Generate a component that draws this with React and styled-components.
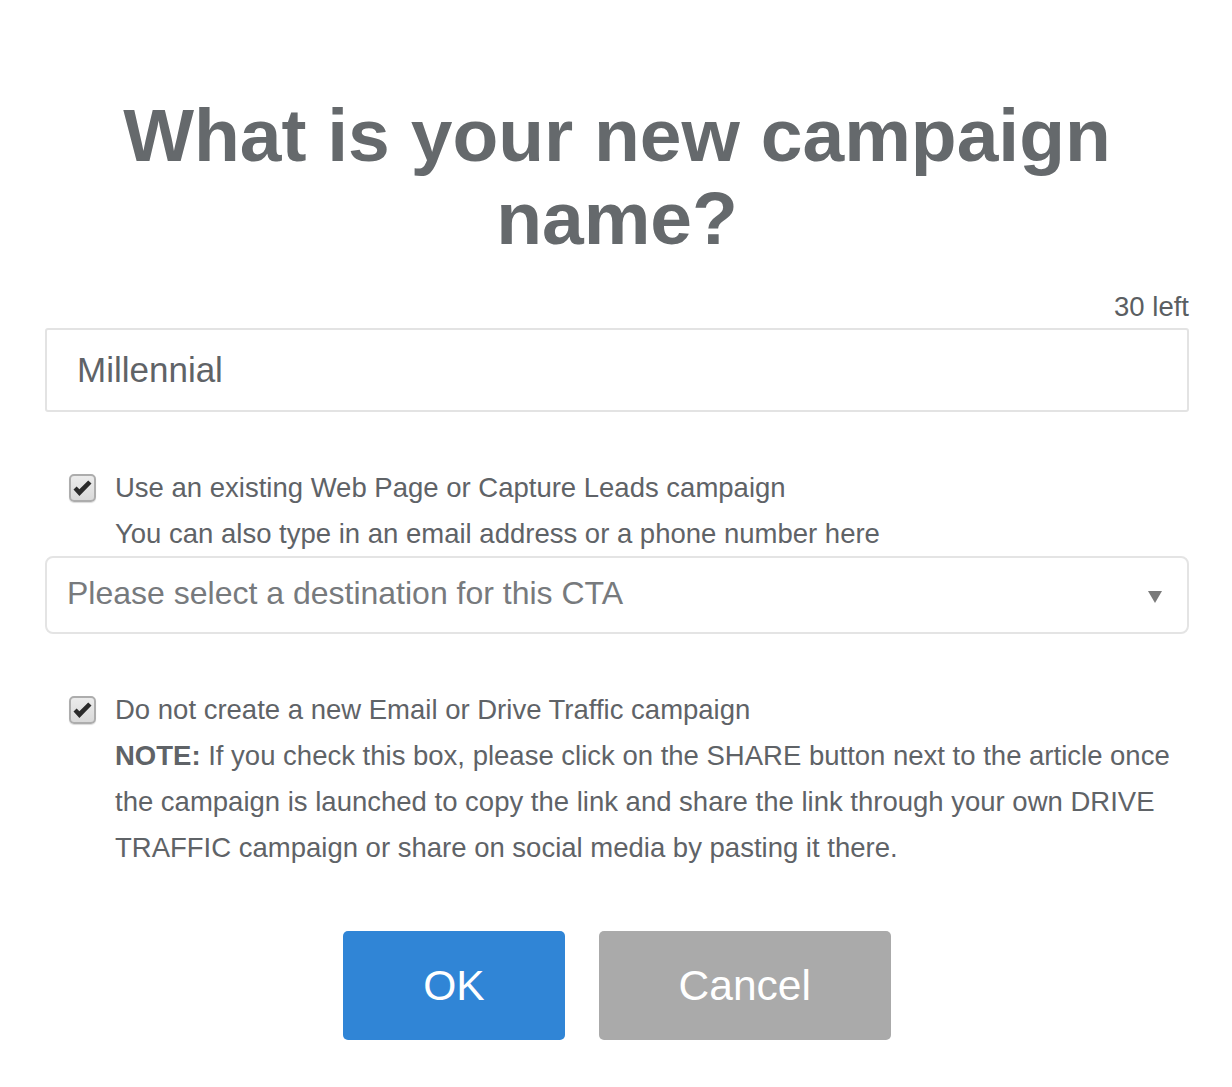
import React from "react";
import styled, { createGlobalStyle } from "styled-components";

const GlobalStyle = createGlobalStyle`
  body {
    margin: 0;
    background: #ffffff;
    font-family: "Liberation Sans", Arial, sans-serif;
  }
`;

const Dialog = styled.div`
  width: 1144px;
  margin-left: 45px;
  padding-top: 94px;
  padding-bottom: 47px;
  color: #5f6367;
`;

const Title = styled.h2`
  margin: 0;
  font-size: 75px;
  line-height: 83px;
  font-weight: bold;
  text-align: center;
  color: #65696c;
`;

const Counter = styled.div`
  margin-top: 31px;
  text-align: right;
  font-size: 27.5px;
  line-height: 31px;
  color: #5a5e62;
`;

const NameInput = styled.input`
  display: block;
  width: 100%;
  height: 84px;
  margin-top: 6px;
  box-sizing: border-box;
  border: 2px solid #e3e3e3;
  border-radius: 3px;
  padding: 0 30px;
  font-family: inherit;
  font-size: 35px;
  color: #5f6367;
  background: #fff;
  outline: none;
`;

const OptionRow = styled.div`
  display: flex;
  align-items: flex-start;
  margin-top: ${(p) => p.$top}px;
`;

const Box = styled.span`
  flex: none;
  width: 27px;
  height: 28px;
  margin: 9px 19px 0 24px;
  box-sizing: border-box;
  border: 2px solid #adadad;
  border-radius: 5px;
  background: linear-gradient(#ececec, #d9d9d9);
  box-shadow: 0 1px 1px rgba(0, 0, 0, 0.15);
  display: flex;
  align-items: center;
  justify-content: center;
`;

const OptionText = styled.div`
  flex: 1;
  font-size: 27.5px;
  line-height: 46px;
  color: #5f6367;
`;

const Strong = styled.b`
  font-weight: bold;
`;

const Select = styled.div`
  display: flex;
  align-items: center;
  justify-content: space-between;
  height: 78px;
  margin-top: -1px;
  box-sizing: border-box;
  border: 2px solid #e4e4e4;
  border-radius: 8px;
  padding: 0 25px 4px 20px;
  font-size: 32px;
  color: #777a7d;
`;

const Arrow = styled.span`
  width: 0;
  height: 0;
  border-left: 7.5px solid transparent;
  border-right: 7.5px solid transparent;
  border-top: 12px solid #7a7a7a;
  margin-top: 8px;
`;

const Actions = styled.div`
  display: flex;
  justify-content: center;
  gap: 34px;
  margin-top: 60px;
`;

const Button = styled.button`
  height: 109px;
  padding: 0 80px;
  border: none;
  border-radius: 5px;
  background: ${(p) => (p.$primary ? "#3085d6" : "#aaaaaa")};
  color: #ffffff;
  font-family: inherit;
  font-size: 42.5px;
  cursor: pointer;
`;

const Check = () => (
  <svg width="19" height="17" viewBox="0 0 19 17">
    <path d="M0.5 9.5 L3.6 6.4 L6.4 9.3 L15.2 0.5 L18.5 3.6 L6.4 16 Z" fill="#2b2b2b" />
  </svg>
);

const Checkbox = () => (
  <Box>
    <Check />
  </Box>
);

const App = () => {
  return (
    <>
      <GlobalStyle />
      <Dialog>
        <Title>What is your new campaign name?</Title>
        <Counter>30 left</Counter>
        <NameInput defaultValue="Millennial" readOnly />

        <OptionRow $top={53}>
          <Checkbox />
          <OptionText>
            Use an existing Web Page or Capture Leads campaign
            <br />
            You can also type in an email address or a phone number here
          </OptionText>
        </OptionRow>
        <Select>
          <span>Please select a destination for this CTA</span>
          <Arrow />
        </Select>

        <OptionRow $top={53}>
          <Checkbox />
          <OptionText>
            Do not create a new Email or Drive Traffic campaign
            <br />
            <Strong>NOTE:</Strong> If you check this box, please click on the SHARE button
            next to the article once the campaign is launched to copy the link and share
            the link through your own DRIVE TRAFFIC campaign or share on social media by
            pasting it there.
          </OptionText>
        </OptionRow>

        <Actions>
          <Button $primary>OK</Button>
          <Button>Cancel</Button>
        </Actions>
      </Dialog>
    </>
  );
};

export default App;
